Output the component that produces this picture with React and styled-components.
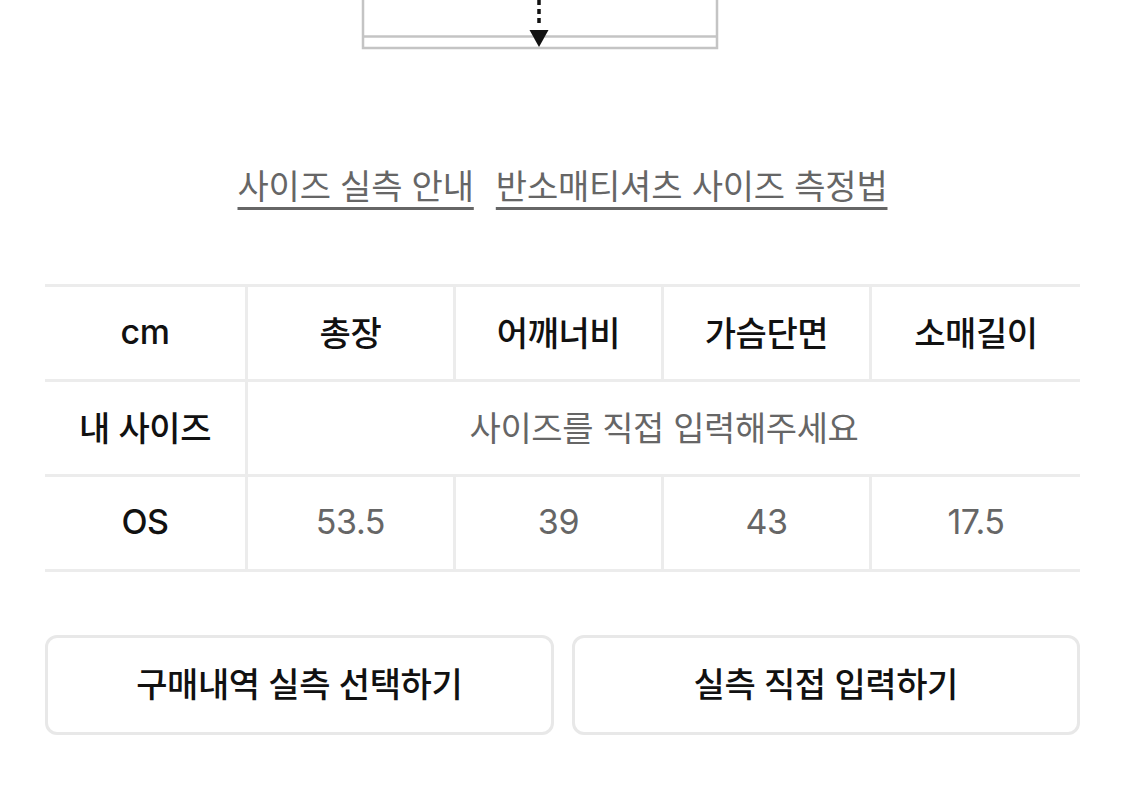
import styled, { createGlobalStyle } from "styled-components";

const GlobalStyle = createGlobalStyle`
    html, body{
        margin: 0;
        padding: 0;
        background: #fff;
    }
    body{
        font-family: "Inter", "Noto Sans CJK KR", sans-serif;
        color: #111;
    }
`;
const Page = styled.main`
    width: 1125px;
    padding: 0 45px;
    box-sizing: border-box;
`;
const Diagram = styled.div`
    display: flex;
    padding-left: 316px;
    height: 50px;
`;
const Links = styled.nav`
    display: flex;
    justify-content: center;
    gap: 22px;
    padding-top: 117px;
    height: 234px;
    box-sizing: border-box;
`;
const GuideLink = styled.a`
    font-size: 34px;
    letter-spacing: -0.2px;
    line-height: 40px;
    color: #666;
    text-decoration: underline;
    text-decoration-thickness: 3px;
    text-underline-offset: 8px;
    text-decoration-color: #666;
    cursor: pointer;
`;
const SizeTable = styled.div`
    display: grid;
    grid-template-columns: 203px repeat(4, 208px);
    border-top: 3px solid #ececec;
`;
const Cell = styled.div`
    height: 92px;
    padding-bottom: 3px;
    box-sizing: border-box;
    height: 95px;
    border-bottom: 3px solid #ececec;
    border-right: ${({$last}) => $last ? "none" : "3px solid #ececec"};
    display: flex;
    align-items: center;
    justify-content: center;
    font-size: 34px;
    letter-spacing: -0.4px;
    color: ${({$muted}) => $muted ? "#666" : "#111"};
    font-weight: ${({$strong}) => $strong ? 500 : 400};
    grid-column: ${({$span}) => $span ? `span ${$span}` : "auto"};
`;
const Actions = styled.div`
    display: grid;
    grid-template-columns: 1fr 1fr;
    gap: 18px;
    margin-top: 63px;
`;
const ActionBtn = styled.button`
    height: 100px;
    padding-bottom: 6px;
    background: #fff;
    border: 3px solid #e8e8e8;
    border-radius: 12px;
    font-family: inherit;
    font-size: 34px;
    letter-spacing: -0.4px;
    font-weight: 500;
    color: #111;
    cursor: pointer;
`;

const headers = ["총장", "어깨너비", "가슴단면", "소매길이"];
const sizes = [{label: "OS", values: ["53.5", "39", "43", "17.5"]}];

const MeasureDrawing = () => (
    <svg width="358" height="50" viewBox="0 0 358 50">
        <g fill="none" stroke="#c4c4c4" strokeWidth="2.5">
            <path d="M2 0 V48 H356 V0" />
            <path d="M2 36.5 H356" />
        </g>
        <path d="M178 0 V26" stroke="#111" strokeWidth="3.5" strokeDasharray="5 4" />
        <path d="M168.5 30 H187.5 L178 47 Z" fill="#111" />
    </svg>
);

const App = () => {
    return <Page>
        <GlobalStyle />
        <Diagram>
            <MeasureDrawing />
        </Diagram>
        <Links>
            <GuideLink>사이즈 실측 안내</GuideLink>
            <GuideLink>반소매티셔츠 사이즈 측정법</GuideLink>
        </Links>
        <SizeTable>
            <Cell $strong>cm</Cell>
            {headers.map((h, i) =>
                <Cell key={h} $strong $last={i === headers.length - 1}>{h}</Cell>
            )}
            <Cell $strong>내 사이즈</Cell>
            <Cell $span={4} $muted $last>사이즈를 직접 입력해주세요</Cell>
            {sizes.map(size => <>
                <Cell key={size.label} $strong>{size.label}</Cell>
                {size.values.map((v, i) =>
                    <Cell key={size.label + i} $muted $last={i === size.values.length - 1}>{v}</Cell>
                )}
            </>)}
        </SizeTable>
        <Actions>
            <ActionBtn>구매내역 실측 선택하기</ActionBtn>
            <ActionBtn>실측 직접 입력하기</ActionBtn>
        </Actions>
    </Page>
}
export default App
